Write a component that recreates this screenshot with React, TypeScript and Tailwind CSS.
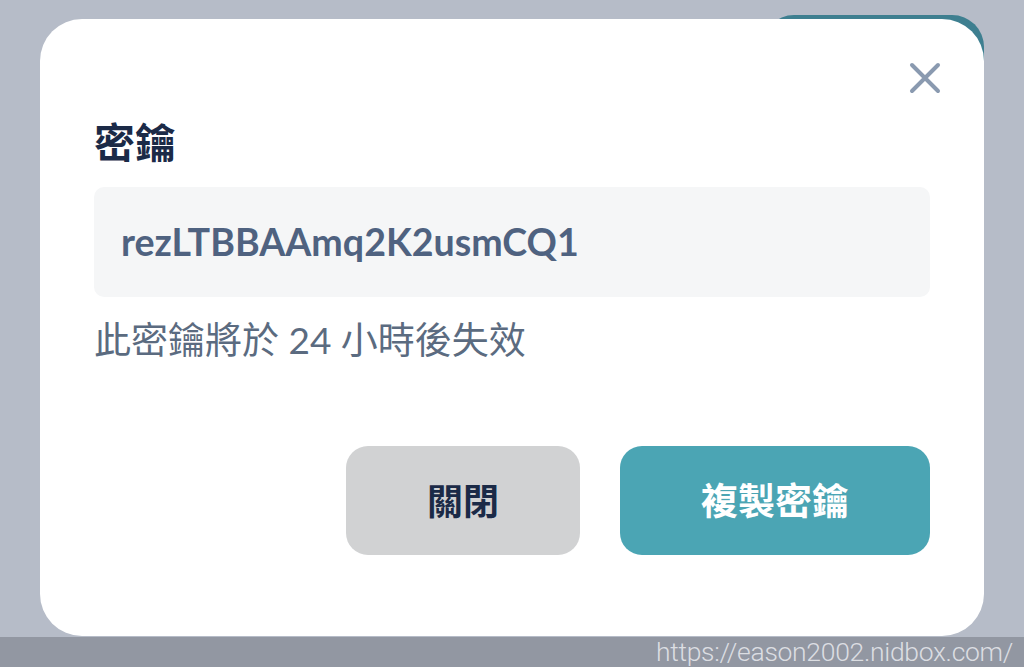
import React from "react";

export default function App() {
  const font = { fontFamily: 'Lato, "Noto Sans CJK TC", sans-serif' };
  return (
    <div className="w-[1024px] h-[667px] bg-[#b6bcc8] flex flex-col overflow-hidden" style={font}>
      <div className="relative flex-1">
        <div className="absolute left-[762px] top-[15px] w-[222px] h-[120px] rounded-[32px] bg-[#3e7f90]" />
        <div className="absolute left-[40px] top-[19px] w-[944px] h-[617px] bg-white rounded-[42px] pl-[54px] pr-[54px] flex flex-col">
          <div className="flex justify-end pt-[43px]">
            <svg width="32" height="32" viewBox="0 0 32 32" className="mr-[-11px]">
              <path d="M3 3 L29 29 M29 3 L3 29" stroke="#8a9ab0" strokeWidth="4" strokeLinecap="round" />
            </svg>
          </div>
          <div className="mt-[25px] text-[41px] leading-[48px] font-bold text-[#1b2a47]">密鑰</div>
          <div className="mt-[20px] h-[110px] rounded-[10px] bg-[#f5f6f7] flex items-center px-[27px] text-[37.6px] font-bold text-[#4f6280]">
            rezLTBBAAmq2K2usmCQ1
          </div>
          <div className="mt-[21px] text-[37px] leading-[44px] text-[#5b6b80]">此密鑰將於 24 小時後失效</div>
          <div className="mt-[84px] flex justify-end gap-[40px]">
            <div className="w-[234px] h-[109px] rounded-[22px] bg-[#d1d2d3] flex items-center justify-center text-[36px] font-bold text-[#1b2a47]">
              關閉
            </div>
            <div className="w-[310px] h-[109px] rounded-[22px] bg-[#4ba5b4] flex items-center justify-center text-[37px] font-bold text-white">
              複製密鑰
            </div>
          </div>
        </div>
      </div>
      <div className="h-[30px] bg-[#9297a2] flex items-center justify-end pr-[11px]">
        <span className="text-[26.5px] leading-[30px] text-[#dcdee2] tracking-[-0.3px]" style={{ fontFamily: 'Roboto, sans-serif', fontWeight: 300 }}>
          https://eason2002.nidbox.com/
        </span>
      </div>
    </div>
  );
}
